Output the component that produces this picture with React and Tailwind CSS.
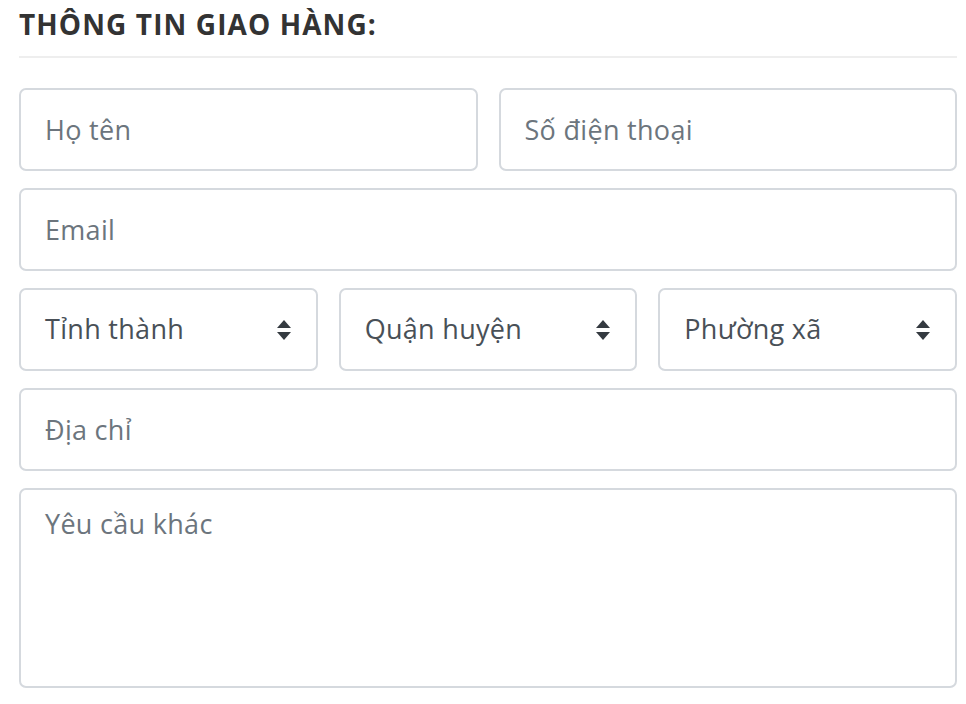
import { useState } from 'react'

const font = { fontFamily: '"Open Sans", "Noto Sans", sans-serif' }

function Field({ placeholder, className = '' }) {
  return (
    <input
      type="text"
      placeholder={placeholder}
      className={`h-[83px] w-full rounded-[7px] border-2 border-[#d5d9de] bg-white px-[24px] text-[27px] tracking-[0.3px] text-[#495057] placeholder:text-[#6c757d] outline-none ${className}`}
    />
  )
}

function Select({ label }) {
  return (
    <div className="relative h-[83px] w-full rounded-[7px] border-2 border-[#d5d9de] bg-white">
      <div className="flex h-full items-center justify-between pl-[24px] pr-[24px]">
        <span className="text-[27px] tracking-[0.3px] text-[#495057]">{label}</span>
        <svg width="16" height="22" viewBox="0 0 16 22" className="text-[#343a40]">
          <path d="M8 1 L15 9 L1 9 Z" fill="currentColor" />
          <path d="M8 21 L15 13 L1 13 Z" fill="currentColor" />
        </svg>
      </div>
    </div>
  )
}

export default function App() {
  const [note, setNote] = useState('')

  return (
    <div className="min-h-[704px] w-[966px] bg-white" style={font}>
      <div className="w-[938px] pl-[19px] box-content">
        <h2 className="pt-[6px] text-[28px] font-bold leading-[36px] tracking-[1.1px] text-[#333333]">THÔNG TIN GIAO HÀNG:</h2>
        <div className="mt-[14px] h-[2px] bg-[#eeeeee]" />

        <div className="mt-[30px] flex flex-col gap-[17px]">
          <div className="grid grid-cols-2 gap-[21px]">
            <Field placeholder="Họ tên" />
            <Field placeholder="Số điện thoại" />
          </div>
          <Field placeholder="Email" />
          <div className="grid grid-cols-3 gap-[21px]">
            <Select label="Tỉnh thành" />
            <Select label="Quận huyện" />
            <Select label="Phường xã" />
          </div>
          <Field placeholder="Địa chỉ" />
          <textarea
            value={note}
            onChange={(e) => setNote(e.target.value)}
            placeholder="Yêu cầu khác"
            className="h-[200px] w-full resize-none rounded-[7px] border-2 border-[#d5d9de] bg-white px-[24px] pt-[16px] text-[27px] leading-[36px] tracking-[0.3px] text-[#495057] placeholder:text-[#6c757d] outline-none"
          />
        </div>
      </div>
    </div>
  )
}
